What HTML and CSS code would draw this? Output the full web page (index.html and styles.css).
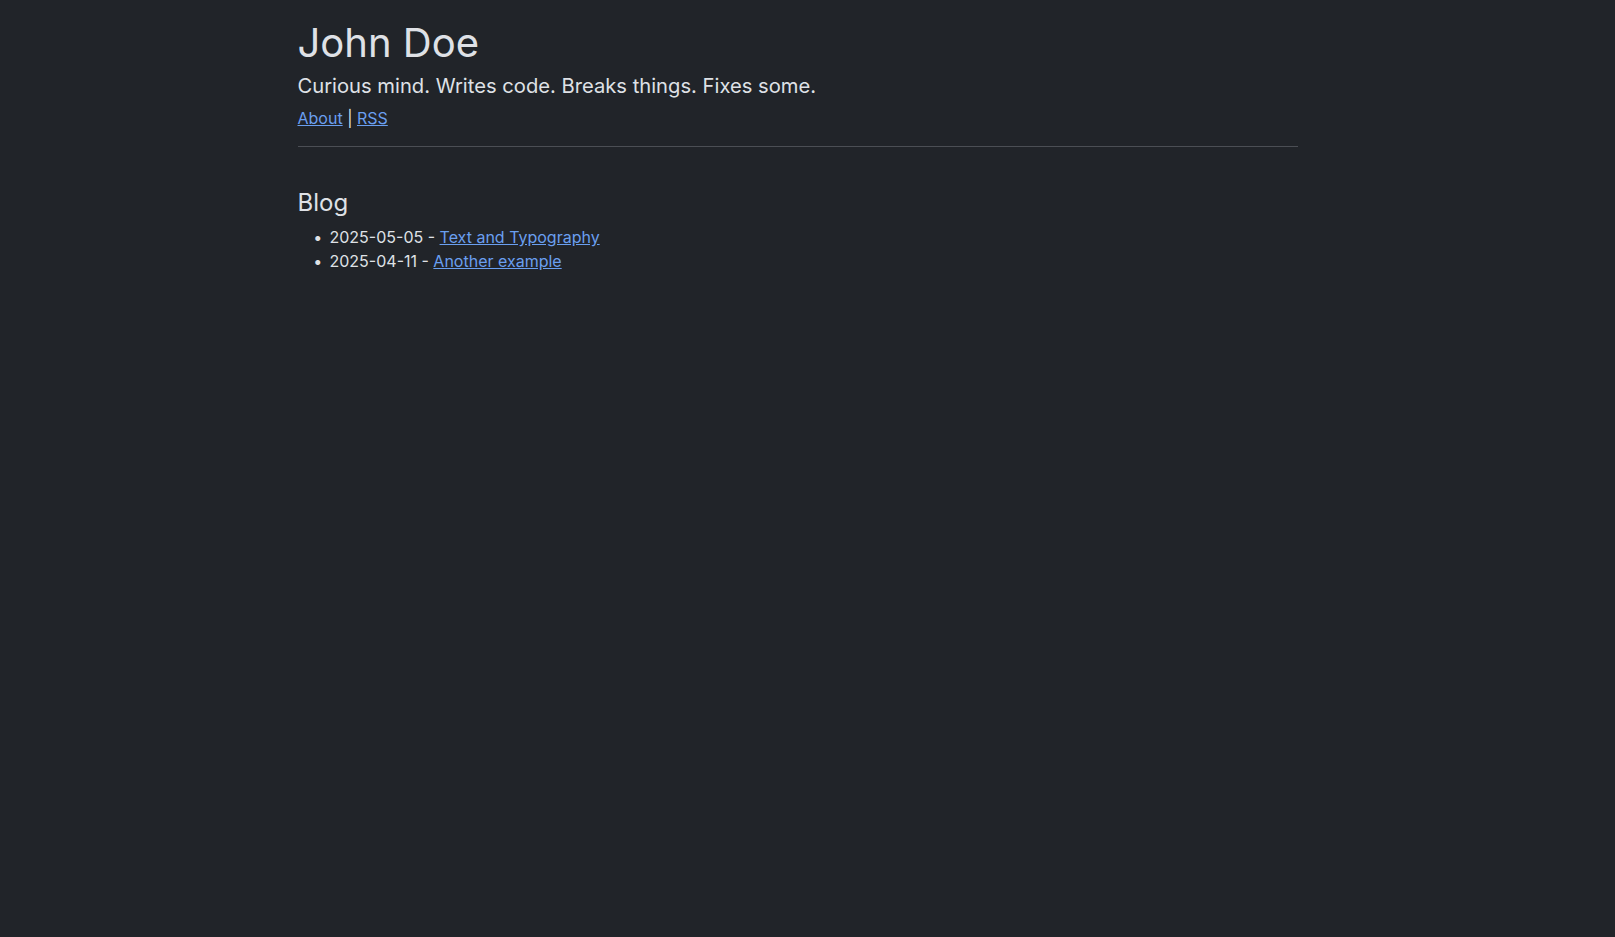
FILE: index.html
```html
<!DOCTYPE html>
<html lang="en">
<head>
  <meta charset="UTF-8" />
  <meta name="viewport" content="width=device-width, initial-scale=1.0"/>
  <title>John Doe</title>
  <link rel="stylesheet" href="styles.css">
</head>

<body>
  <div class="page">
    <!-- Site header -->
    <header class="site-header">
      <h1 class="site-title">John Doe</h1>
      <p class="tagline">Curious mind. Writes code. Breaks things. Fixes some.</p>
      <nav class="site-nav">
        <a href="#">About</a> | <a href="#">RSS</a>
      </nav>
    </header>

    <!-- Post list -->
    <main>
      <h2 class="section-title">Blog</h2>
      <ul class="posts">
        <li>2025-05-05 - <a href="#">Text and Typography</a></li>
        <li>2025-04-11 - <a href="#">Another example</a></li>
      </ul>
    </main>
  </div>
</body>
</html>
```

FILE: styles.css
```css
/* Basic Reset */
* {
  margin: 0;
  padding: 0;
  box-sizing: border-box;
}

body {
  background-color: #212429;
  color: #dfe1e6;
  font-family: Inter, "Noto Sans", sans-serif;
  font-size: 16px;
  line-height: 1.5;
  padding-right: 20px;
}

.page {
  max-width: 1000px;
  margin: 0 auto;
}

a {
  color: #6a9ff0;
}

/* HEADER */
.site-header {
  padding-top: 19px;
  padding-bottom: 16px;
  border-bottom: 1px solid #4b4e54;
}

.site-title {
  font-size: 40px;
  font-weight: 400;
  line-height: 1.2;
}

.tagline {
  font-size: 20.2px;
  margin-top: 4px;
}

.site-nav {
  font-size: 16px;
  margin-top: 5px;
}

/* BLOG LIST */
.section-title {
  font-size: 24px;
  font-weight: 400;
  margin-top: 38px;
  margin-bottom: 4px;
}

.posts {
  padding-left: 32px;
}

.posts li {
  line-height: 24px;
}

.posts li::marker {
  content: "\2022  \2009";
}
```
